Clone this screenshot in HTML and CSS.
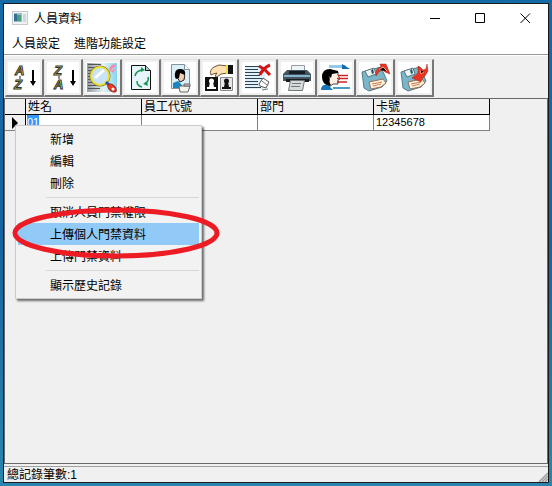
FILE: index.html
```html
<!DOCTYPE html>
<html lang="zh-Hant">
<head>
<meta charset="utf-8">
<title>人員資料</title>
<link rel="stylesheet" href="styles.css">
</head>
<body>
<main class="window">
  <header class="titlebar">
    <svg class="app-icon" width="16" height="14" viewBox="0 0 16 14"><path fill="#c3cbd0" d="M0 0h16v14H0z"/><path fill="#eef2f4" d="M1 1h14v12H1z"/><path fill="#a8b8c2" d="M2 2h8v9H2z"/><path fill="#2f719b" d="M2 3h3v7H2z"/><path fill="#49a277" d="M5 4h4v6H5z"/><path fill="#cfd7dc" d="M11 3h3v8h-3z"/></svg>
    <h1 class="title">人員資料</h1>
    <div class="controls">
      <button class="control" aria-label="最小化"><svg width="11" height="11"><path d="M0 5.5h10" stroke="#000"/></svg></button>
      <button class="control" aria-label="最大化"><svg width="11" height="11"><path d="M.5.5h9v9h-9z" fill="none" stroke="#000"/></svg></button>
      <button class="control" aria-label="關閉"><svg width="11" height="11"><path d="M.5.5l9.5 9.5M10 .5L.5 10" stroke="#000"/></svg></button>
    </div>
  </header>
  <nav class="menubar">
    <button class="menu-title">人員設定</button>
    <button class="menu-title">進階功能設定</button>
  </nav>
  <div class="toolbar" role="toolbar">
    <button class="tool" aria-label="遞增排序"><svg viewBox="0 0 32 32"><g class="sort-letters"><text x="7" y="13">A</text><text x="6" y="27">Z</text></g><path d="M12 14v3" stroke="#222"/><path d="M25 8v12" stroke="#000" stroke-width="2"/><path d="M22 19h6l-3 5z"/></svg></button>
    <button class="tool" aria-label="遞減排序"><svg viewBox="0 0 32 32"><g class="sort-letters"><text x="7" y="13">Z</text><text x="7" y="27">A</text></g><path d="M12 14v3" stroke="#222"/><path d="M26 8v12" stroke="#000" stroke-width="2"/><path d="M23 19h6l-3 5z"/></svg></button>
    <button class="tool" aria-label="搜尋"><svg viewBox="0 0 32 32"><defs><linearGradient id="sky"><stop offset="0" stop-color="#929aa0"/><stop offset=".55" stop-color="#e4f2f6"/><stop offset="1" stop-color="#83d5ed"/></linearGradient></defs><path fill="url(#sky)" d="M1 1h30v29H1z"/><path stroke="#555" d="M2 2.5h13M2 5.5h10M2 8.500h5M2 11.500h4M2 14.500h4M2 17.500h4M2 20.500h5M2 23.500h8M2 26.500h12"/><path fill="#f58cb0" d="M23 6l4-4 2 1 1-3v4l-3 2-3 4zM25 9l5-3-3 5z"/><circle cx="14" cy="14" r="9" fill="#dceefa" stroke="#706d22" stroke-width="3"/><circle cx="14" cy="14" r="9" fill="#c8e3f6" stroke="#efdf36" stroke-width="2"/><path stroke="#fff" stroke-width="3" d="M9 16l9-8"/><path stroke="#294eac" stroke-width="3" d="M20 20l4 4"/><ellipse cx="26" cy="26" rx="5" ry="3" transform="rotate(42 26 26)" fill="#ee3c22" stroke="#a52118"/><circle cx="27" cy="27" r="1.5" fill="#fff"/></svg></button>
    <button class="tool" aria-label="重新整理"><svg viewBox="0 0 32 32"><path fill="#e7f5fb" stroke="#111" d="M6.5 3.5h14l5 5v19h-19z"/><path fill="#b0c7d1" stroke="#111" d="M20.5 3.5v5h5"/><path fill="none" stroke="#149653" stroke-width="1.5" d="M10 14q1-5 7-6M12 19q0 5 5 6M21 21q3-2 2-6"/><path fill="#149653" d="M16 5l4 3-4 2zM18 22l4-3 1 5z"/></svg></button>
    <button class="tool" aria-label="人員檔案"><svg viewBox="0 0 32 32"><path fill="#dceef7" stroke="#81929d" d="M7.5 2.5h13l5 5v19h-18z"/><path fill="#fff" stroke="#81929d" d="M20.5 2.5v5h5"/><path fill="#f4cdb1" stroke="#222" d="M14 9h5q3 4 1 9l-4 2-3-5z"/><path d="M11 15q-1-9 6-8 5 0 4 6l-5-2-1 5-3 1z"/><path fill="#1885bd" d="M9 26v-5l5-2 4 4-1 3z"/><path fill="#f3f3ee" stroke="#666" d="M15 24h11l-2 6h-8z"/><path stroke="#666" fill="#ccc" d="M20 24v-2h6v2z"/></svg></button>
    <button class="tool" aria-label="人員對調"><svg viewBox="0 0 32 32"><path fill="#111" d="M2 15h13v14H2z"/><path fill="#e6e6e6" stroke="#888" d="M17.5 15.5h12v13h-12z"/><g fill="#fff"><circle cx="8.500" cy="19" r="2.500"/><path d="M7 20h3l1 5h2v2H4v-2h2z"/></g><g fill="#111"><circle cx="23.500" cy="19" r="2.500"/><path d="M22 20h3l1 5h2v2h-9v-2h2z"/></g><path fill="#ffe1b4" stroke="#6a573b" d="M8 13q-2-5 3-8l5-2 9 1v7l-7 1-4 3-2-1 2-3-4 1z"/><path fill="#111" d="M25 3h5v9h-5z"/><path fill="#f4da48" d="M23 3h2v9h-2z"/></svg></button>
    <button class="tool" aria-label="刪除資料"><svg viewBox="0 0 32 32"><path fill="#e2f0f7" d="M3 4h20v23H3z"/><path stroke="#2c4355" d="M3 4.5h17M3 7.5h13M3 10.5h15M3 13.5h15M3 16.5h17M3 19.5h13M3 22.5h13M3 25.5h16"/><path fill="none" stroke="#d41414" stroke-width="3" d="M17 4q6 3 11 9M28 3q-7 3-10 10"/><path fill="#fff" stroke="#555" d="M17 22l4-6 6 4-3 6-6-2z"/><path stroke="#777" fill="none" d="M20 19l5 4M20 28l6-1"/></svg></button>
    <button class="tool" aria-label="列印"><svg viewBox="0 0 32 32"><path fill="#eef5f8" stroke="#99a" d="M10.500 3.500h13v7h-13z"/><path fill="#46545f" d="M6 8h20l4 4v7H2v-7z"/><path fill="#85b6cf" d="M3 13h26v2H3z"/><path fill="#151e25" d="M8 9h16v3H8zM5 17h23v3H5z"/><path fill="#d5dadd" stroke="#777" d="M9.500 18.500h14l-2 10h-14z"/><path stroke="#777" d="M11 21.500h9M10 24.500h9"/></svg></button>
    <button class="tool" aria-label="人員輸出"><svg viewBox="0 0 32 32"><path fill="#94c9ea" d="M9 3h17v3H9z"/><path fill="#116ab1" d="M22 2l8 5h-8z"/><path fill="#fff0e4" stroke="#444" d="M10 9l8 1v3l2 4-2 1v4h-5l-4 3z"/><path d="M2 15q0-8 8-8l8 2v2l-6 1-1 4-2-2v6l2 3-2 1q-7-2-7-9z"/><path fill="#1676b9" d="M1 28q0-6 7-5l5 5z"/><path stroke="#d32225" stroke-width="1.500" d="M18 13.500h10M17 16.500h11M17 20h10"/><path stroke="#4a9cc9" stroke-width="2" d="M13 26h17"/></svg></button>
    <button class="tool" aria-label="上傳"><svg viewBox="0 0 32 32"><path fill="#79b6c9" stroke="#567c89" d="M3 10l19-5 6 14-5 6-13 4-5-3z"/><path fill="#edf5f6" stroke="#567782" d="M6 9l9-3 2 6-8 3z"/><path fill="#31505b" d="M12 8l2-1 1 4-2 1z"/><path fill="#fff1dd" stroke="#996e51" d="M10 20l14-3 3 4-5 4-10 2z"/><path stroke="#c77c51" d="M13 22l10-2M14 24l8-2"/><path fill="#e93423" stroke="#9f241b" stroke-width=".5" d="M17 14q-1-8 5-9l-1-3 6 0 4 10-5-2-2-2q-4 0-7 6z"/><path stroke="#ffa07b" d="M20 8l4-3 4 4"/></svg></button>
    <button class="tool" aria-label="下載"><svg viewBox="0 0 32 32"><path fill="#79b6c9" stroke="#567c89" d="M3 10l19-5 6 14-5 6-13 4-5-3z"/><path fill="#edf5f6" stroke="#567782" d="M6 9l9-3 2 6-8 3z"/><path fill="#31505b" d="M12 8l2-1 1 4-2 1z"/><path fill="#fff1dd" stroke="#996e51" d="M10 20l14-3 3 4-5 4-10 2z"/><path stroke="#c77c51" d="M13 22l10-2M14 24l8-2"/><path fill="#e93423" stroke="#9f241b" stroke-width=".5" d="M14 16l6-5 0-7 3 2 2 2 3-1 1-5 1 7-3 5-3 3-1 3z"/><path stroke="#ffa07b" d="M22 8l1 4 3-2"/></svg></button>
  </div>
  <section class="grid-area">
    <table class="grid">
      <colgroup><col class="marker-col"><col><col><col><col></colgroup>
      <thead><tr><th></th><th>姓名</th><th>員工代號</th><th>部門</th><th>卡號</th></tr></thead>
      <tbody><tr><td class="marker"><svg width="6" height="12"><path d="M0 0l6 6-6 6z"/></svg></td><td><span class="selected">01</span></td><td></td><td></td><td>12345678</td></tr></tbody>
    </table>
    <div class="context-menu" role="menu">
      <button class="item" role="menuitem">新增</button>
      <button class="item" role="menuitem">編輯</button>
      <button class="item" role="menuitem">刪除</button>
      <hr class="separator">
      <button class="item" role="menuitem">取消人員門禁權限</button>
      <button class="item active" role="menuitem">上傳個人門禁資料</button>
      <button class="item" role="menuitem">上傳門禁資料</button>
      <hr class="separator">
      <button class="item" role="menuitem">顯示歷史記錄</button>
    </div>
    <svg class="highlight-ring" width="208" height="54"><ellipse cx="104" cy="27" rx="101" ry="23" fill="none" stroke="#ed1c24" stroke-width="5"/></svg>
  </section>
  <footer class="statusbar"><span>總記錄筆數:1</span><svg class="grip" width="10" height="10"><path d="M1 10l9-9M4 10l6-6M7 10l3-3" stroke="#999" stroke-width="1.5"/></svg></footer>
</main>
</body>
</html>
```
FILE: styles.css
```css
* { box-sizing: border-box; }
body {
  margin: 0;
  min-height: 100vh;
  display: flex;
  padding: 3px;
  background: linear-gradient(#146aa5, #1565a0 50%, #2a86ad);
  color: #000;
  font: 12px/16px "Liberation Sans", "Noto Sans CJK TC", sans-serif;
}
button {
  border: 0;
  padding: 0;
  background: none;
  color: inherit;
  font: inherit;
}
svg { display: block; }
.window {
  flex: 1;
  min-width: 0;
  display: flex;
  flex-direction: column;
  border: 1px solid #1b1b1f;
  background: #f0f0f0;
}
.titlebar {
  display: flex;
  align-items: center;
  height: 28px;
  padding-left: 8px;
  background: #fff;
}
.title {
  margin: 0 0 0 6px;
  padding-top: 2px;
  font: inherit;
}
.controls { display: flex; margin-left: auto; }
.control {
  width: 45px;
  height: 28px;
  display: grid;
  place-items: center;
}
.menubar {
  display: flex;
  gap: 14px;
  height: 23px;
  padding: 2px 8px 0;
  background: #fff;
  border-bottom: 1px solid #999;
}
.toolbar {
  display: flex;
  height: 43px;
  padding: 3px 0 0 1px;
  border-top: 1px solid #fff;
}
.tool {
  width: 39px;
  height: 38px;
  padding: 2px;
  display: grid;
  place-items: center;
  background: #fff;
  border: 1px solid #e3e3e3;
  border-right: 2px solid #777;
  border-bottom: 2px solid #777;
  box-shadow: inset 0 0 0 2px #f0f0f0;
}
.tool svg { width: 32px; height: 32px; }
.sort-letters {
  font: italic bold 13px "Liberation Sans", sans-serif;
  fill: #f0ec50;
  stroke: #333;
  stroke-width: 1px;
}
.grid-area {
  position: relative;
  flex: 1;
  border: 1px solid #696969;
}
.grid {
  width: 485px;
  table-layout: fixed;
  border-collapse: separate;
  border-spacing: 0;
}
.marker-col { width: 21px; }
.grid th, .grid td {
  height: 16px;
  padding: 0 0 0 2px;
  border-right: 1px solid #808080;
  border-bottom: 1px solid #808080;
  background: #fff;
  font-weight: 400;
  font-size: 11px;
  line-height: 15px;
  text-align: left;
}
.grid th {
  padding-top: 1px;
  border-color: #000;
  background: #f0f0f0;
  font-size: 12px;
  line-height: 14px;
}
.grid .marker {
  padding-left: 7px;
  border-right-color: #000;
  background: #f0f0f0;
}
.grid td:nth-child(2) { padding-left: 1px; }
.selected {
  display: inline-block;
  background: #3399ff;
  color: #fff;
}
.context-menu {
  position: absolute;
  left: 10px;
  top: 26px;
  width: 187px;
  padding: 2px;
  border: 1px solid #ccc;
  background: #f2f2f2;
  box-shadow: 2px 2px 2px rgb(0 0 0 / 55%);
}
.item {
  display: block;
  width: 100%;
  height: 22px;
  padding: 1px 0 0 32px;
  text-align: left;
}
.item.active { background: #91c9f7; }
.separator {
  height: 1px;
  margin: 3px 0 3px 28px;
  border: 0;
  background: #d7d7d7;
}
.highlight-ring {
  position: absolute;
  left: 7px;
  top: 107px;
  pointer-events: none;
}
.statusbar {
  display: flex;
  align-items: flex-end;
  justify-content: space-between;
  height: 16px;
  margin-top: 2px;
  padding-left: 3px;
  border-top: 1px solid #a0a0a0;
  line-height: 14px;
}
```
